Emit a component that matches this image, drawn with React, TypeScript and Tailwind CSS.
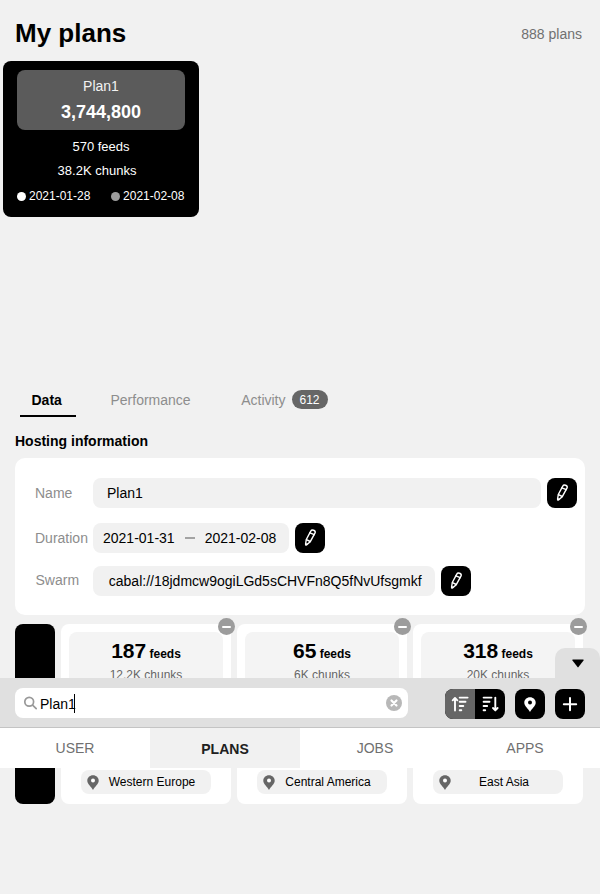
import React from "react";

function Pencil() {
  return (
    <button className="flex h-[30px] w-[30px] shrink-0 items-center justify-center rounded-lg bg-black">
      <svg width="30" height="30" viewBox="0 0 30 30" fill="none" stroke="white" strokeWidth="1.4" strokeLinejoin="round" strokeLinecap="round">
        <path d="M11.300 16.500 15.900 7.900C16.700 6.300 20.800 7.100 20.200 9.700L15.300 18.700 11.500 21.900Q10.500 22.200 10.600 21Z" />
        <path d="M14.900 9.800 19.200 11.700M11.500 16.700 15.200 18.500" />
        <path d="M10.800 20.200 12.400 21.200 10.900 22.200Z" fill="white" strokeWidth="0.500" />
      </svg>
    </button>
  );
}

function Pin({ className, hole }: { className: string; hole: string }) {
  return (
    <svg className={className} viewBox="0 0 12 15">
      <path d="M6 .2C2.700.2.300 2.600.300 5.700.300 8.900 4.200 11.500 6 14.900 7.800 11.500 11.700 8.900 11.700 5.700 11.700 2.600 9.300.2 6 .2Z" fill="currentColor" />
      <circle cx="6" cy="5.500" r="2" className={hole} />
    </svg>
  );
}

function PlanCard() {
  return (
    <section className="ml-[3px] flex h-[156px] w-[196px] flex-col rounded-lg bg-black px-[14px] pt-[9px] text-center text-white">
      <div className="h-[60px] rounded-lg bg-[#5b5b5b] pt-2">
        <div className="text-sm leading-4 text-[#f2f2f2]">Plan1</div>
        <div className="mt-2 text-[18px] font-bold leading-5">3,744,800</div>
      </div>
      <div className="mt-[9px] text-[13px] leading-4">570 feeds</div>
      <div className="mt-2 pr-2 text-[13px] leading-4">38.2K chunks</div>
      <div className="-mr-px mt-[9px] flex gap-[20.700px] text-xs leading-4">
        <span className="flex items-center gap-[3px]"><i className="h-[9px] w-[9px] rounded-full bg-white" />2021-01-28</span>
        <span className="flex items-center gap-[3px]"><i className="h-[9px] w-[9px] rounded-full bg-[#9c9c9c]" />2021-02-08</span>
      </div>
    </section>
  );
}

function Tabs() {
  return (
    <div className="flex h-[38px] pl-5 text-sm text-[#8d8d8d]">
      <div className="h-[37px] w-[55.5px] border-b-2 border-black pl-[11.5px] pt-3 font-bold leading-4 text-black">Data</div>
      <div className="ml-[35px] pt-3 leading-4">Performance</div>
      <div className="ml-[50.5px] pt-3 leading-4">Activity</div>
      <div className="ml-[6px] mt-[10px] h-[19px] w-9 rounded-full bg-[#666] text-center text-xs leading-5 text-white">612</div>
    </div>
  );
}

function Hosting() {
  return (
    <section className="mx-[15px] h-[157px] rounded-[10px] bg-white pl-5 pt-5 text-sm leading-[30px]">
      <div className="flex">
        <span className="w-[58px] text-[#8d8d8d]">Name</span>
        <div className="mr-1.5 w-[448px] rounded-lg bg-[#f1f1f1] pl-[14px]">Plan1</div>
        <Pencil />
      </div>
      <div className="mt-[15px] flex">
        <span className="w-[58px] text-[#8d8d8d]">Duration</span>
        <div className="mr-1.5 flex w-[196px] items-center rounded-lg bg-[#f1f1f1] pl-[10px]">
          2021-01-31<i className="mx-[10px] h-0.5 w-[10px] bg-[#a3a3a3]" />2021-02-08
        </div>
        <Pencil />
      </div>
      <div className="mt-[13px] flex">
        <span className="h-[30px] w-[58px] pl-[0.5px] leading-7 text-[#8d8d8d]">Swarm</span>
        <div className="mr-1.5 w-[342px] rounded-lg bg-[#f1f1f1] pl-[15.800px]">cabal://18jdmcw9ogiLGd5sCHVFn8Q5fNvUfsgmkf</div>
        <Pencil />
      </div>
    </section>
  );
}

const regions = [
  { feeds: "187", chunks: "12.2K chunks", name: "Western Europe" },
  { feeds: "65", chunks: "6K chunks", name: "Central America" },
  { feeds: "318", chunks: "20K chunks", name: "East Asia" },
];

function Regions() {
  return (
    <section className="mt-[9px] flex gap-1.5 pl-[15px]">
      <div className="h-[180px] w-10 rounded-lg bg-black" />
      {regions.map((r) => (
        <div key={r.name} className="relative flex h-[180px] w-[170px] flex-col rounded-lg bg-white px-2 pt-2">
          <div className="h-[120px] rounded-lg bg-[#f4f4f4] pt-[7px] text-center">
            <div className="h-6 text-xs font-bold leading-6"><span className="text-[21px]">{r.feeds}</span> feeds</div>
            <div className="mt-1 text-xs leading-4 text-[#666]">{r.chunks}</div>
          </div>
          <div className="ml-3 mt-[18px] flex h-6 w-[130px] items-center rounded-lg bg-[#f1f1f1] pl-1.5 text-xs">
            <Pin className="h-[15px] w-3 text-[#666666]" hole="fill-white" />
            <span className="ml-px w-[104px] text-center">{r.name}</span>
          </div>
          <div className="absolute -right-[3.500px] -top-[6px] flex h-[17px] w-[17px] items-center justify-center rounded-full bg-[#9c9c9c]">
            <i className="h-[2px] w-[9px] rounded bg-white" />
          </div>
        </div>
      ))}
    </section>
  );
}

function Dock() {
  return (
    <div className="absolute left-0 top-[648px] w-[600px]">
      <div className="flex h-[30px] justify-end">
        <div className="flex w-[45px] justify-center rounded-t-[10px] bg-[#e0e0e0] pt-[11px]">
          <svg width="12" height="9" viewBox="0 0 12 9"><path d="M.900.500H11.100Q12 .500 11.500 1.400L6.500 8.100Q6 8.700 5.500 8.100L.500 1.400Q0 .500 .900.500Z" /></svg>
        </div>
      </div>
      <div className="flex h-[50px] border-b border-[#c4c4c4] bg-[#e0e0e0] pl-[15px] pt-[10px]">
        <div className="flex h-[30px] w-[393px] items-center rounded-lg bg-white pl-2 pr-[6px]">
          <svg width="16" height="16" viewBox="0 0 16 16" fill="none" stroke="#999" strokeWidth="1.700" strokeLinecap="round"><circle cx="6.200" cy="6.700" r="4.400" /><path d="M9.600 10.100 13.200 13.600" /></svg>
          <span className="ml-px mt-0.5 text-sm">Plan1</span>
          <i className="-ml-[1.500px] mt-px h-[19px] w-px bg-black" />
          <svg className="ml-auto" width="16" height="16" viewBox="0 0 16 16"><circle cx="8" cy="8" r="8" fill="#b8b8b8" /><path d="M5.500 5.500 10.500 10.500M10.500 5.500 5.500 10.500" stroke="white" strokeWidth="2.200" strokeLinecap="round" /></svg>
        </div>
        <div className="ml-[37px] mt-px flex h-[30px] overflow-hidden rounded-lg bg-black">
          <svg className="bg-[#666]" width="30" height="30" viewBox="0 0 30 30" fill="none" stroke="white" strokeWidth="1.900" strokeLinecap="round" strokeLinejoin="round"><path d="M10 21.500V9.200M7.700 11.300 10 8.900 12.300 11.300M14.700 8.600H22.600M14.700 12.800H20.500M14.700 17H18.300M14.700 21.300H16.300" /></svg>
          <svg width="30" height="30" viewBox="0 0 30 30" fill="none" stroke="white" strokeWidth="1.900" strokeLinecap="round" strokeLinejoin="round"><path d="M20.300 8.600V21M18 19 20.300 21.400 22.600 19M8.600 8.600H16.500M8.600 12.800H14.500M8.600 17H12.200M8.600 21.300H10.200" /></svg>
        </div>
        <button className="ml-[10px] mt-px flex h-[30px] w-[30px] items-center justify-center rounded-lg bg-black text-white"><Pin className="mt-px h-[15px] w-3" hole="fill-black" /></button>
        <button className="ml-[10px] mt-px h-[30px] w-[30px] rounded-lg bg-black"><svg width="30" height="30" stroke="white" strokeWidth="2" strokeLinecap="round"><path d="M15 9V21.300M8.800 15.200H21.200" /></svg></button>
      </div>
      <nav className="grid h-10 grid-cols-4 bg-white text-center text-sm leading-10 text-[#707070]">
        <div>USER</div>
        <div className="h-10 bg-[#f1f1f1] font-bold leading-[42px] text-[#202020]">PLANS</div>
        <div>JOBS</div>
        <div>APPS</div>
      </nav>
    </div>
  );
}

export default function App() {
  return (
    <main className="relative h-[894px] w-[600px] overflow-hidden bg-[#f1f1f1] font-['Liberation_Sans',Arial,sans-serif] text-black">
      <header className="flex h-[61px] justify-between pl-[15px] pr-[18px]">
        <h1 className="mt-[18px] text-[26px] font-bold leading-[30px]">My plans</h1>
        <span className="mt-[26px] text-sm leading-4 text-[#707070]">888 plans</span>
      </header>
      <div className="h-[319px]"><PlanCard /></div>
      <Tabs />
      <h2 className="h-10 pl-[15px] pt-[15px] text-sm font-bold leading-4">Hosting information</h2>
      <Hosting />
      <Regions />
      <Dock />
    </main>
  );
}
